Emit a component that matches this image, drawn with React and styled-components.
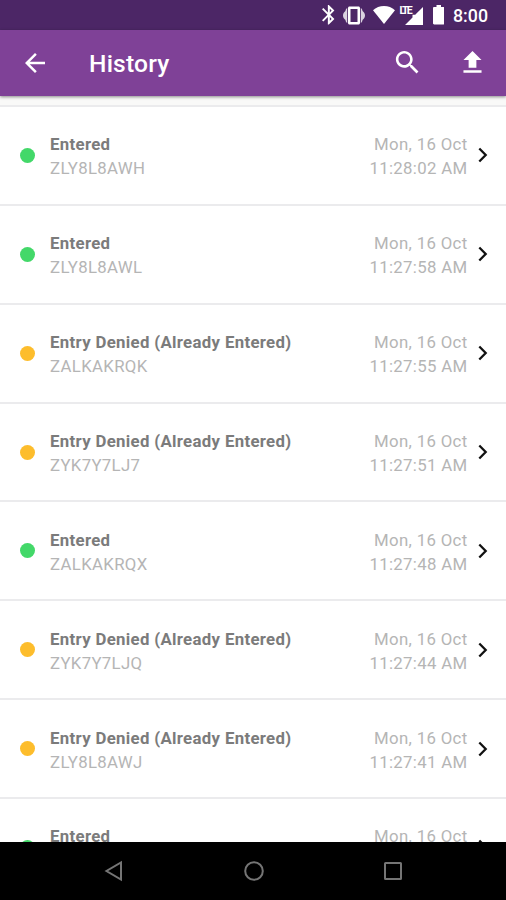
import React from 'react';
import styled, { createGlobalStyle } from 'styled-components';

const entries = [
    { status: 'Entered', code: 'ZLY8L8AWH', time: '11:28:02 AM', ok: true },
    { status: 'Entered', code: 'ZLY8L8AWL', time: '11:27:58 AM', ok: true },
    { status: 'Entry Denied (Already Entered)', code: 'ZALKAKRQK', time: '11:27:55 AM', ok: false },
    { status: 'Entry Denied (Already Entered)', code: 'ZYK7Y7LJ7', time: '11:27:51 AM', ok: false },
    { status: 'Entered', code: 'ZALKAKRQX', time: '11:27:48 AM', ok: true },
    { status: 'Entry Denied (Already Entered)', code: 'ZYK7Y7LJQ', time: '11:27:44 AM', ok: false },
    { status: 'Entry Denied (Already Entered)', code: 'ZLY8L8AWJ', time: '11:27:41 AM', ok: false },
    { status: 'Entered', code: '', time: '', ok: true },
];

function Status() {
    return (
        <StatusBar>
            <StatusIcon width="12.5" height="19.5" viewBox="5 2 12.8 20">
                <path d="M17.71 7.71L12 2h-1v7.59L6.41 5 5 6.41 10.59 12 5 17.59 6.41 19 11 14.41V22h1l5.71-5.71-4.3-4.29 4.3-4.29zM13 5.83l1.88 1.88L13 9.59V5.83zm1.88 10.46L13 18.17v-3.76l1.88 1.88z" />
            </StatusIcon>
            <StatusIcon $left={8.3} width="22" height="19" viewBox="0 0 22 19">
                <path
                    fillRule="evenodd"
                    d="M6.500.5h9c.8 0 1.500.6 1.500 1.500v15c0 .8-.7 1.500-1.500 1.500h-9c-.8 0-1.500-.7-1.500-1.500V2C5 1.100 5.700.5 6.500.5zM7.500 3v13h7V3z"
                />
                <path opacity="0.8" d="M4.200 2v15C3.200 16.300 2.600 15.200 2.500 14 .9 12.800 0 11.300 0 9.500S.9 6.200 2.500 5c.1-1.200.7-2.300 1.700-3zM17.800 2v15c1-.7 1.600-1.800 1.700-3 1.600-1.200 2.500-2.700 2.500-4.500S21.100 6.200 19.500 5c-.1-1.200-.7-2.300-1.700-3z" />
            </StatusIcon>
            <StatusIcon $left={7.3} width="22" height="18" viewBox="0 0 22 18">
                <path d="M11 18L0 4.2C3 1.6 6.8 0 11 0s8 1.6 11 4.2z" />
            </StatusIcon>
            <Signal>
                <Lte>LTE</Lte>
                <svg width="18" height="18" viewBox="0 0 18 18">
                    <path d="M0 18L7.500 10.500V7.800h2.700L18 0v18z" />
                </svg>
            </Signal>
            <StatusIcon $left={9.5} width="11.5" height="19.5" viewBox="0 0 11.5 19.5">
                <path d="M3.500 0h4.500v2h2.300c.7 0 1.200.5 1.200 1.200v15.100c0 .7-.5 1.200-1.200 1.200H1.200c-.7 0-1.200-.5-1.200-1.200V3.200C0 2.500.5 2 1.200 2h2.300z" />
            </StatusIcon>
            <Clock>8:00</Clock>
        </StatusBar>
    );
}

function Entry({ entry }) {
    return (
        <Row>
            <Dot $ok={entry.ok} />
            <Info>
                <Title>{entry.status}</Title>
                <Muted>{entry.code}</Muted>
            </Info>
            <When>
                <Muted>Mon, 16 Oct</Muted>
                <Muted>{entry.time}</Muted>
            </When>
            <Chevron width="10" height="16" viewBox="0 0 10 16">
                <path d="M1.300 1.500L7.700 8l-6.400 6.500" />
            </Chevron>
        </Row>
    );
}

function App() {
    return (
        <Screen>
            <GlobalStyle />
            <Status />
            <Toolbar>
                <IconButton aria-label="Back">
                    <svg width="30" height="30" viewBox="0 0 24 24">
                        <path d="M20 11H7.830l5.590-5.590L12 4l-8 8 8 8 1.410-1.410L7.830 13H20v-2z" />
                    </svg>
                </IconButton>
                <Heading>History</Heading>
                <IconButton aria-label="Search">
                    <svg width="31" height="31" viewBox="0 0 24 24">
                        <path d="M15.500 14h-.79l-.28-.27C15.410 12.590 16 11.110 16 9.500 16 5.910 13.090 3 9.500 3S3 5.910 3 9.500 5.910 16 9.500 16c1.610 0 3.090-.59 4.230-1.570l.27.28v.79l5 4.990L20.490 19l-4.990-5zm-6 0C7.010 14 5 11.990 5 9.500S7.010 5 9.500 5 14 7.010 14 9.500 11.990 14 9.500 14z" />
                    </svg>
                </IconButton>
                <IconButton aria-label="Upload" $left={33.5}>
                    <svg width="31" height="31" viewBox="0 0 24 24">
                        <path d="M9 16h6v-6h4l-7-7-7 7h4zm-4 2h14v2H5z" />
                    </svg>
                </IconButton>
            </Toolbar>
            <List>
                {entries.map((entry, index) => (
                    <Entry entry={entry} key={index} />
                ))}
            </List>
            <NavBar>
                <svg width="20" height="22" viewBox="0 0 20 22">
                    <path d="M17 2.500v17L2.500 11z" />
                </svg>
                <svg width="20" height="20" viewBox="0 0 20 20">
                    <circle cx="10" cy="10" r="8.8" />
                </svg>
                <svg width="20" height="20" viewBox="0 0 20 20">
                    <rect x="2" y="2" width="16" height="16" rx="0.5" />
                </svg>
            </NavBar>
        </Screen>
    );
}

export default App;

const GlobalStyle = createGlobalStyle`
    body {
        margin: 0;
        background: #fff;
        font-family: Roboto, sans-serif;
    }

    * {
        box-sizing: border-box;
    }
`

const Screen = styled.div`
    width: 506px;
    height: 900px;
    display: flex;
    flex-direction: column;
    overflow: hidden;
`

const StatusBar = styled.div`
    height: 30px;
    flex: none;
    display: flex;
    align-items: center;
    justify-content: flex-end;
    padding-right: 18px;
    background: #4c2666;
    color: #fff;
`

const StatusIcon = styled.svg`
    flex: none;
    margin-left: ${({ $left = 0 }) => $left}px;
    fill: #fff;
`

const Signal = styled.div`
    display: flex;
    align-items: center;
    margin-left: 5px;

    & > svg {
        fill: #fff;
        margin-top: 1px;
    }
`

const Lte = styled.span`
    align-self: flex-start;
    width: 5.5px;
    font-size: 10.5px;
    line-height: 9px;
    font-weight: 700;
    letter-spacing: -1.9px;
    white-space: nowrap;
`

const Clock = styled.span`
    width: 35px;
    margin-left: 9px;
    padding-top: 2px;
    font-size: 17.8px;
    line-height: 22px;
    font-weight: 500;
    white-space: nowrap;
`

const Toolbar = styled.header`
    height: 66px;
    flex: none;
    display: flex;
    align-items: center;
    padding: 0 18.5px 1px 20px;
    background: #7f4197;
    color: #fff;
    box-shadow: 0 1px 3px rgba(0, 0, 0, 0.45);
    z-index: 1;
`

const IconButton = styled.button`
    display: flex;
    padding: 0;
    border: none;
    background: none;
    margin-left: ${({ $left = 0 }) => $left}px;
    cursor: pointer;

    & > svg {
        fill: #fff;
    }
`

const Heading = styled.h1`
    flex: 1;
    margin: 0 0 0 39px;
    padding-top: 2px;
    font-size: 24.6px;
    line-height: 30px;
    font-weight: 500;
    letter-spacing: 0.2px;
`

const List = styled.main`
    flex: 1;
    min-height: 0;
    padding-top: 9px;
    overflow: hidden;
    background: linear-gradient(#f9f9f8 9px, #fff 9px);
`

const Row = styled.div`
    height: 98.86px;
    display: flex;
    align-items: center;
    padding: 0 18px 0 20px;
    border-top: 2px solid #ebebed;
`

const Dot = styled.span`
    flex: none;
    width: 15px;
    height: 15px;
    border-radius: 50%;
    background: ${({ $ok }) => ($ok ? '#43d869' : '#fdbd2c')};
`

const Info = styled.div`
    flex: 1;
    height: 50px;
    margin-left: 15px;
    padding-top: 2px;
`

const When = styled.div`
    height: 50px;
    padding-top: 2px;
    text-align: right;
`

const Title = styled.div`
    font-size: 16.8px;
    line-height: 24px;
    font-weight: 700;
    letter-spacing: 0.33px;
    color: #7b7b7b;
`

const Muted = styled.div`
    font-size: 16.8px;
    line-height: 24px;
    letter-spacing: 0.33px;
    color: #b5b5b5;
`

const Chevron = styled.svg`
    flex: none;
    margin-left: 10.5px;
    fill: none;
    stroke: #111;
    stroke-width: 2.3;
`

const NavBar = styled.nav`
    height: 58px;
    flex: none;
    display: flex;
    align-items: center;
    justify-content: space-between;
    padding: 0 103px 0 104px;
    background: #000;

    & > svg {
        fill: none;
        stroke: #757575;
        stroke-width: 2;
    }
`
